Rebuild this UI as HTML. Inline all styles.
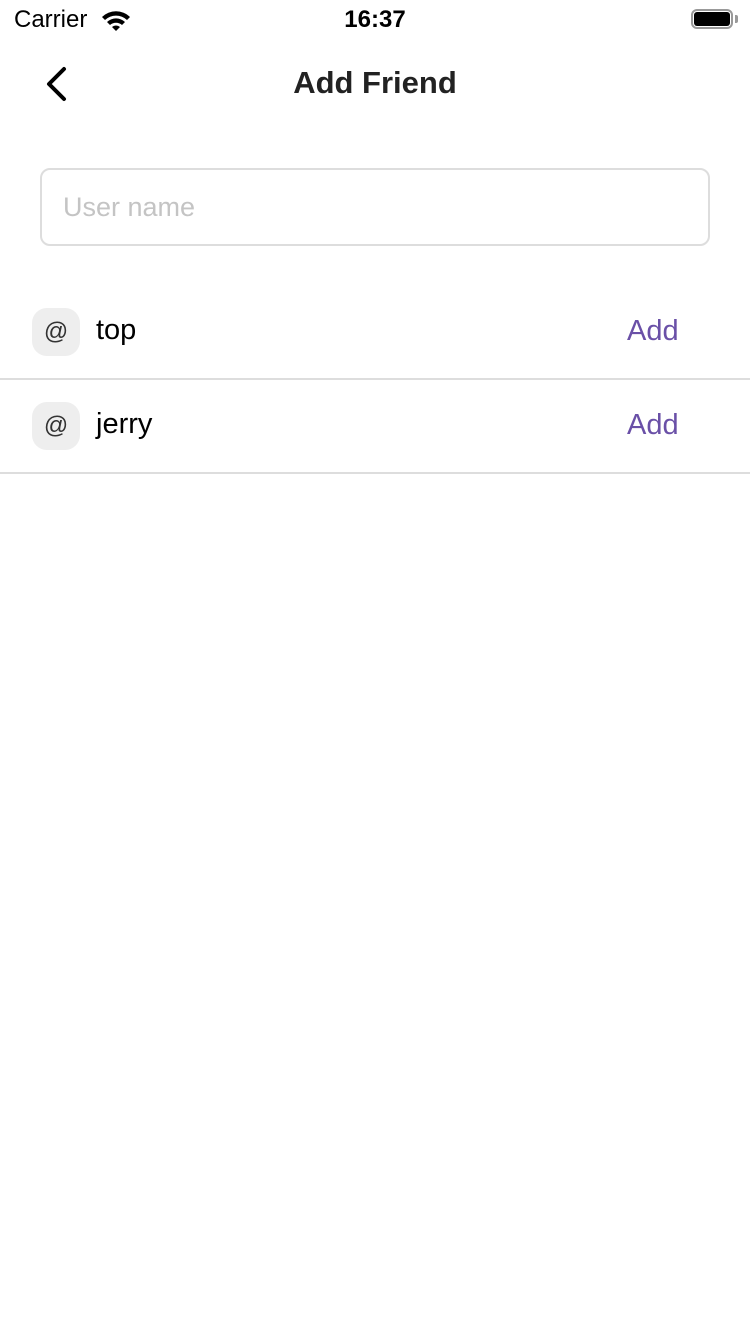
<!DOCTYPE html>
<html><head><style>
body{margin:0;width:750px;height:1334px;background:#fff;font-family:"Liberation Sans",sans-serif;position:relative;overflow:hidden}
.a{position:absolute}
</style></head><body>
<div class="a" style="left:14px;top:6px;font-size:24px;color:#000">Carrier</div>
<svg class="a" style="left:100px;top:9px" width="32" height="24" viewBox="0 0 32 24"><path d="M2 8 A20 20 0 0 1 30 8 L27 11 A16 16 0 0 0 5 11Z M7 13 A13 13 0 0 1 25 13 L22 16 A9 9 0 0 0 10 16Z M12 18 A6 6 0 0 1 20 18 L16 22Z" fill="#000"/></svg>
<div class="a" style="left:0;width:750px;text-align:center;top:6px;font-size:24px;font-weight:bold;color:#000">16:37</div>
<div class="a" style="left:691px;top:9px;width:42px;height:20px;border:2px solid #999;border-radius:6px;box-sizing:border-box"></div>
<div class="a" style="left:694px;top:12px;width:36px;height:14px;background:#000;border-radius:3px"></div>
<div class="a" style="left:735px;top:15px;width:3px;height:8px;background:#999;border-radius:0 2px 2px 0"></div>
<svg class="a" style="left:40px;top:66px" width="30" height="36" viewBox="0 0 30 36"><path d="M24 3 L9 18 L24 33" stroke="#000" stroke-width="4" fill="none" stroke-linecap="round" stroke-linejoin="round"/></svg>
<div class="a" style="left:0;width:750px;text-align:center;top:65px;font-size:31px;font-weight:bold;color:#222">Add Friend</div>
<div class="a" style="left:40px;top:168px;width:670px;height:78px;border:2px solid #ddd;border-radius:10px;box-sizing:border-box"></div>
<div class="a" style="left:63px;top:192px;font-size:27px;color:#c4c4c4">User name</div>
<div class="a" style="left:32px;top:308px;width:48px;height:48px;background:#eee;border-radius:15px;text-align:center;line-height:48px;font-size:24px;color:#333">@</div>
<div class="a" style="left:96px;top:314px;font-size:29px;color:#000">top</div>
<div class="a" style="left:627px;top:315px;font-size:29px;color:#6a50a7">Add</div>
<div class="a" style="left:0;top:378px;width:750px;height:2px;background:#ddd"></div>
<div class="a" style="left:32px;top:402px;width:48px;height:48px;background:#eee;border-radius:15px;text-align:center;line-height:48px;font-size:24px;color:#333">@</div>
<div class="a" style="left:96px;top:408px;font-size:29px;color:#000">jerry</div>
<div class="a" style="left:627px;top:409px;font-size:29px;color:#6a50a7">Add</div>
<div class="a" style="left:0;top:472px;width:750px;height:2px;background:#ddd"></div>
</body></html>
